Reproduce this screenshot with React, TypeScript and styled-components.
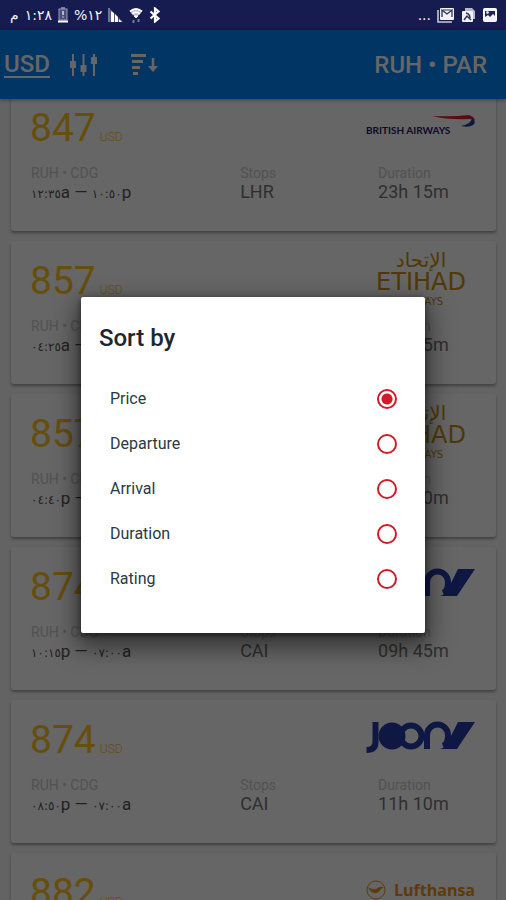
import React, { useState } from "react";
import styled, { createGlobalStyle } from "styled-components";

const GlobalStyle = createGlobalStyle`
  * { box-sizing: border-box; }
  body { margin: 0; font-family: Roboto, "DejaVu Sans", sans-serif; }
`;

const Screen = styled.div`
  display: flex;
  flex-direction: column;
  height: 100vh;
  overflow: hidden;
  background: #f7f7f7;
`;

const StatusBar = styled.div`
  display: flex;
  align-items: center;
  justify-content: space-between;
  flex: none;
  height: 30px;
  padding: 0 8px 0 10px;
  background: #161b50;
  color: #f4f4fa;
  font: 14px/20px "DejaVu Sans", sans-serif;
`;

const StatusGroup = styled.div`
  display: flex;
  align-items: center;
  gap: 6px;

  svg { display: block; }
`;

const AppArea = styled.div`
  position: relative;
  display: flex;
  flex-direction: column;
  flex: 1;
  min-height: 0;
`;

const AppBar = styled.header`
  display: flex;
  align-items: center;
  flex: none;
  height: 69px;
  padding: 1px 19px 0 4px;
  background: #0085fa;
  color: #fff;
  box-shadow: 0 1px 4px rgba(0, 0, 0, 0.4);
  z-index: 1;
`;

const BarButton = styled.button`
  display: flex;
  padding: 0;
  border: 0;
  background: none;
  color: inherit;
  font: 500 24px/28px Roboto, sans-serif;
  margin-right: 30px;
`;

const CurrencyButton = styled(BarButton)`
  border-bottom: 2px solid currentColor;
  line-height: 24px;
  margin-right: 19px;
`;

const Route = styled.h1`
  margin: 0 0 0 auto;
  font-size: 24px;
  line-height: 28px;
  font-weight: 500;
`;

const FlightList = styled.main`
  display: flex;
  flex-direction: column;
  gap: 10px;
  flex: 1;
  min-height: 0;
  padding: 0 10px 0 11px;
  overflow: hidden;

  > :first-child { margin-top: -11px; }
`;

const Card = styled.article`
  flex: none;
  padding: 8px 20px 28px 19px;
  border-radius: 3px;
  background: #fff;
  box-shadow: 0 2px 3px rgba(0, 0, 0, 0.35);
`;

const CardTop = styled.div`
  display: flex;
  justify-content: space-between;
  height: 69px;
`;

const Price = styled.div`
  display: flex;
  align-items: baseline;
  gap: 4px;
  padding-top: 8px;
  color: #ffc21e;
  font-size: 39px;
  line-height: 48px;

  small { font-size: 12px; font-weight: 300; }
`;

const Facts = styled.dl`
  display: grid;
  grid-template-columns: 47fr 31fr 22fr;
  margin: 0;
  padding-left: 1px;
`;

const Label = styled.dt`
  color: #cccccc;
  font-size: 14px;
  line-height: 16px;
`;

const Value = styled.dd<{ $strong?: boolean }>`
  margin: 0;
  color: ${(p) => (p.$strong ? "#555" : "#777")};
  font-size: ${(p) => (p.$strong ? 17 : 18)}px;
  line-height: 22px;
  white-space: nowrap;
`;

const Digits = styled.span`
  font: 12px/16px "DejaVu Sans", sans-serif;
  direction: ltr;
  unicode-bidi: isolate;
`;

const Scrim = styled.div`
  position: absolute;
  inset: 0;
  display: flex;
  align-items: center;
  justify-content: center;
  background: rgba(0, 0, 0, 0.6);
  z-index: 2;
`;

const Dialog = styled.form`
  width: 68%;
  max-width: 420px;
  padding: 26px 0 32px;
  border-radius: 2px;
  background: #fff;
  box-shadow: 0 10px 24px 4px rgba(0, 0, 0, 0.5), 0 2px 6px rgba(0, 0, 0, 0.5);
`;

const DialogTitle = styled.h2`
  margin: 0 18px 23px;
  color: #1c2830;
  font-size: 24px;
  line-height: 30px;
  font-weight: 500;
`;

const Option = styled.label`
  display: flex;
  align-items: center;
  justify-content: space-between;
  height: 45px;
  padding: 0 28px 0 29px;
  color: #2a3a42;
  font-size: 16px;
`;

const Radio = styled.input`
  appearance: none;
  width: 20px;
  height: 20px;
  margin: 0;
  border: 2px solid #d01c28;
  border-radius: 50%;

  &:checked {
    background: radial-gradient(circle, #d01c28 0 5px, transparent 6px);
  }
`;

const Battery = () => (
  <svg width="10" height="16" viewBox="0 0 10 16">
    <rect x="1" y="2" width="8" height="11" fill="#4b4e78" stroke="#9a9cba" />
    <path d="M3 1h4" stroke="#9a9cba" strokeWidth="1.5" />
    <path d="M5 4v4M5 9.500v1" stroke="#dcdce8" strokeWidth="1.500" />
    <path d="M0 14.500h10" stroke="#fff" strokeWidth="2" />
  </svg>
);

const Signal = () => (
  <svg width="15" height="16" viewBox="0 0 15 16">
    <path d="M1 1v14" stroke="#8f91b0" strokeWidth="1.500" />
    <path d="M2 2l13 13H2z" fill="#55587f" />
    <path d="M3 4l3 2v9H3zM7 7l3 3v5H7zM11 12l3 3h-3z" fill="#fff" />
  </svg>
);

const Wifi = () => (
  <svg width="14" height="17" viewBox="0 0 14 17" fill="none" stroke="#fff">
    <path d="M1 4.500Q7-1 13 4.500L7 11z" fill="#b9bbd0" stroke="none" />
    <path d="M1 4.500Q7-.5 13 4.500M3 7q4-3.500 8 0" strokeWidth="1.800" />
    <path d="M5 9l2 2 2-2z" fill="#fff" />
    <path d="M4.500 16v-3M9.500 12v3" stroke="#777aa0" strokeWidth="2" />
  </svg>
);

const Bluetooth = () => (
  <svg width="12" height="16" viewBox="0 0 12 16" fill="none" stroke="#fff" strokeWidth="2.200">
    <path d="M1.500 4.500l8 7L6 14.500v-13l3.500 3-8 7" />
  </svg>
);

const MailIcon = () => (
  <svg width="18" height="16" viewBox="0 0 18 16">
    <path d="M1 3v12h14" fill="none" stroke="#c8c9dc" strokeWidth="1.600" />
    <rect x="3" y="1" width="14" height="12" rx="1" fill="#f2f2f8" />
    <path d="M5 10V3l5 4 5-4v7" fill="none" stroke="#2a2e60" strokeWidth="1.300" />
    <path d="M6 3h8" stroke="#2a2e60" />
  </svg>
);

const CopiesIcon = () => (
  <svg width="15" height="16" viewBox="0 0 15 16">
    <path d="M4 1h7l3 3v8h-3V6L9 4H4z" fill="#b5b7cf" />
    <rect x="1" y="4" width="11" height="11" rx="1" fill="#f2f2f8" />
    <path d="M3 13l3-4 4 4M5 6q4 1 4 5" fill="none" stroke="#2a2e60" strokeWidth="1.400" />
  </svg>
);

const PictureIcon = () => (
  <svg width="16" height="16" viewBox="0 0 16 16">
    <rect x="1.500" y="1.500" width="13" height="13" rx="1" fill="#f2f2f8" stroke="#fff" />
    <path d="M3 4h10v5l-2-2-3 3-2-2-3 2z" fill="#20245a" />
    <circle cx="5.500" cy="5.500" r="1.300" fill="#fff" />
  </svg>
);

const SlidersIcon = () => (
  <svg width="30" height="26" viewBox="0 0 30 26" stroke="currentColor" fill="none">
    <path d="M4 2v22M14.500 2v22M25 2v22" strokeWidth="2" />
    <path d="M4 9v7M14.500 13v7M25 5v7" strokeWidth="6" />
  </svg>
);

const SortIcon = () => (
  <svg width="30" height="26" viewBox="0 0 30 26" stroke="currentColor" fill="none">
    <path d="M2 3.500h15M3 9.500h11M3 15.500h8M4 21.500h5" strokeWidth="3.200" />
    <path d="M24 6v10" strokeWidth="2.600" />
    <path d="M19 14h10l-5 6z" fill="currentColor" stroke="none" />
  </svg>
);

const BritishAirways = () => (
  <svg width="110" height="60" viewBox="0 0 110 60" role="img" aria-label="British Airways">
    <text x="0" y="38" fontFamily="Lato" fontWeight="700" fontSize="10" fill="#1c1c5c">BRITISH AIRWAYS</text>
    <path d="M66 20q20 1 37-1 6 2 6 6-1-2-6-2-20 1-37-3z" fill="#e0202c" />
    <path d="M106 22q5 4 1 7-4 3-12 1 10-2 11-8z" fill="#24409c" />
  </svg>
);

const Etihad = () => (
  <svg width="110" height="60" viewBox="0 0 110 60" role="img" aria-label="Etihad Airways" fill="#c8900f" textAnchor="middle">
    <text x="55" y="18" fontFamily="DejaVu Sans" fontSize="20">الإتحاد</text>
    <text x="55" y="41" fontFamily="DejaVu Sans" fontSize="24">ETIHAD</text>
    <text x="55" y="56" fontFamily="DejaVu Sans" fontSize="10">AIRWAYS</text>
  </svg>
);

const Joon = () => (
  <svg width="110" height="60" viewBox="0 0 110 60" role="img" aria-label="Joon" fill="none" stroke="#263ca8" strokeWidth="6">
    <path d="M9.500 14v20q0 8-9 8" />
    <circle cx="26" cy="28" r="13.500" fill="#263ca8" stroke="none" />
    <circle cx="45" cy="28" r="10.500" strokeWidth="6" />
    <path d="M61 41V27a10.500 10.500 0 0 1 21 0q0 9-5 11" />
    <path d="M92 14h17L91 41H74q5-1 8-7z" fill="#263ca8" stroke="none" />
  </svg>
);

const Lufthansa = () => (
  <svg width="110" height="60" viewBox="0 0 110 60" role="img" aria-label="Lufthansa">
    <circle cx="10" cy="29" r="9" fill="none" stroke="#e89410" />
    <path d="M2 26q4 3 8 2 4-3 8-2l-3 2q-3 5-7 4-4-1-6-6z" fill="#e89410" />
    <text x="28" y="35" fontFamily="Open Sans" fontWeight="700" fontSize="16" fill="#e89410">Lufthansa</text>
  </svg>
);

type Flight = {
  price: number;
  leave: [string, string];
  arrive: [string, string];
  stop: string;
  duration: string;
  Logo: () => React.ReactElement;
};

const flights: Flight[] = [
  { price: 847, leave: ["١٢:٣٥", "a"], arrive: ["١٠:٥٠", "p"], stop: "LHR", duration: "23h 15m", Logo: BritishAirways },
  { price: 857, leave: ["٠٤:٢٥", "a"], arrive: ["٠٧:٠٠", "a"], stop: "AUH", duration: "27h 35m", Logo: Etihad },
  { price: 857, leave: ["٠٤:٤٠", "p"], arrive: ["٠٧:٠٠", "a"], stop: "AUH", duration: "15h 20m", Logo: Etihad },
  { price: 874, leave: ["١٠:١٥", "p"], arrive: ["٠٧:٠٠", "a"], stop: "CAI", duration: "09h 45m", Logo: Joon },
  { price: 874, leave: ["٠٨:٥٠", "p"], arrive: ["٠٧:٠٠", "a"], stop: "CAI", duration: "11h 10m", Logo: Joon },
  { price: 882, leave: ["٠١:٣٥", "a"], arrive: ["٠٢:٠٠", "p"], stop: "FRA", duration: "13h 25m", Logo: Lufthansa },
];

const sortOptions = ["Price", "Departure", "Arrival", "Duration", "Rating"];

const FlightCard = ({ price, leave, arrive, stop, duration, Logo }: Flight) => (
  <Card>
    <CardTop>
      <Price>{price}<small>USD</small></Price>
      <Logo />
    </CardTop>
    <Facts>
      <div>
        <Label>RUH • CDG</Label>
        <Value $strong>
          <Digits>{leave[0]}</Digits>{leave[1]} — <Digits>{arrive[0]}</Digits>{arrive[1]}
        </Value>
      </div>
      <div>
        <Label>Stops</Label>
        <Value>{stop}</Value>
      </div>
      <div>
        <Label>Duration</Label>
        <Value>{duration}</Value>
      </div>
    </Facts>
  </Card>
);

export default function App() {
  const [sort, setSort] = useState("Price");
  return (
    <Screen>
      <GlobalStyle />
      <StatusBar>
        <StatusGroup>
          <span>م</span>
          <span>١:٢٨</span>
          <Battery />
          <bdo dir="ltr">%١٢</bdo>
          <Signal />
          <Wifi />
          <Bluetooth />
        </StatusGroup>
        <StatusGroup>
          <span>...</span>
          <MailIcon />
          <CopiesIcon />
          <PictureIcon />
        </StatusGroup>
      </StatusBar>
      <AppArea>
        <AppBar>
          <CurrencyButton type="button">USD</CurrencyButton>
          <BarButton type="button" aria-label="Filters"><SlidersIcon /></BarButton>
          <BarButton type="button" aria-label="Sort"><SortIcon /></BarButton>
          <Route>RUH • PAR</Route>
        </AppBar>
        <FlightList>
          {flights.map((f, i) => <FlightCard key={i} {...f} />)}
        </FlightList>
        <Scrim>
          <Dialog role="dialog" aria-labelledby="sort-title">
            <DialogTitle id="sort-title">Sort by</DialogTitle>
            {sortOptions.map((name) => (
              <Option key={name}>
                {name}
                <Radio type="radio" name="sort" checked={sort === name} onChange={() => setSort(name)} />
              </Option>
            ))}
          </Dialog>
        </Scrim>
      </AppArea>
    </Screen>
  );
}
